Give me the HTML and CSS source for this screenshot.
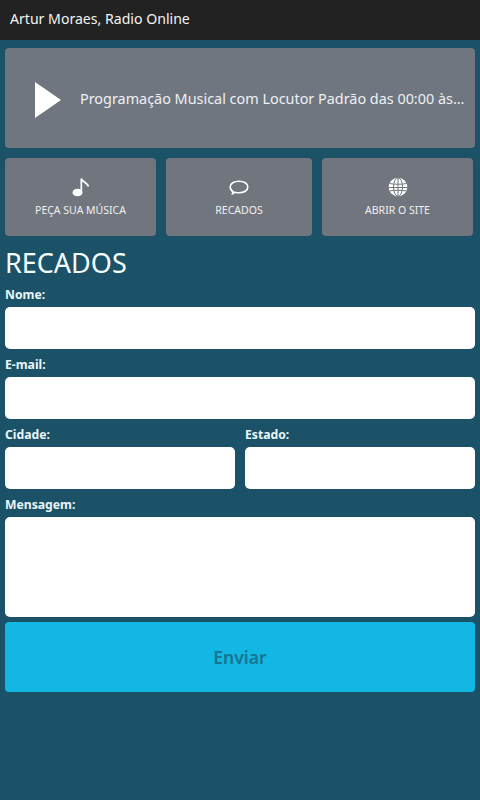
FILE: index.html
```html
<!DOCTYPE html>
<html lang="pt-BR">
<head>
<meta charset="utf-8">
<title>Artur Moraes, Radio Online</title>
<link rel="stylesheet" href="styles.css">
</head>
<body>
<header class="topbar">Artur Moraes, Radio Online</header>
<main class="page">
  <section class="player">
    <svg class="play" width="28" height="36" viewBox="0 0 28 36" aria-hidden="true"><path d="M1 0 L27 18 L1 36 Z" fill="#fff"/></svg>
    <p class="now">Programação Musical com Locutor Padrão das 00:00 às…</p>
  </section>
  <nav class="actions">
    <a class="action">
      <svg width="20" height="20" viewBox="0 0 20 20" aria-hidden="true"><ellipse cx="6.5" cy="15.5" rx="5" ry="3.8" fill="#fff"/><path d="M10.3 15V1.5 C11 5 16.5 5.500 17.500 9.500" fill="none" stroke="#fff" stroke-width="1.700"/></svg>
      <span>PEÇA SUA MÚSICA</span>
    </a>
    <a class="action">
      <svg width="20" height="20" viewBox="0 0 20 20" aria-hidden="true"><path d="M4.200 14.800 C2 13.500 1.200 11.800 1.200 10 C1.200 6.500 5 4.200 10 4.200 C15 4.200 18.800 6.500 18.800 10 C18.800 13.500 15 15.800 10 15.800 C8.500 15.800 7.200 15.600 6 15.200 L3.200 17 Z" fill="none" stroke="#fff" stroke-width="1.600" stroke-linejoin="round"/></svg>
      <span>RECADOS</span>
    </a>
    <a class="action">
      <svg width="20" height="20" viewBox="0 0 20 20" aria-hidden="true"><circle cx="10" cy="10" r="9.300" fill="#fff"/><g fill="none" stroke="#70757e" stroke-width="1"><ellipse cx="10" cy="10" rx="4.500" ry="9.300"/><path d="M10 .7V19.300M1.500 6.500C6 7.500 14 7.500 18.500 6.500M.8 10.500H19.200M1.500 14C6 13 14 13 18.500 14"/></g></svg>
      <span>ABRIR O SITE</span>
    </a>
  </nav>
  <h1 class="title">RECADOS</h1>
  <form class="form">
    <div class="field"><label for="nome">Nome:</label><input id="nome" type="text"></div>
    <div class="field"><label for="email">E-mail:</label><input id="email" type="text"></div>
    <div class="pair">
      <div class="field"><label for="cidade">Cidade:</label><input id="cidade" type="text"></div>
      <div class="field"><label for="estado">Estado:</label><input id="estado" type="text"></div>
    </div>
    <div class="field"><label for="msg">Mensagem:</label><textarea id="msg"></textarea></div>
    <button class="send" type="button">Enviar</button>
  </form>
</main>
</body>
</html>
```

FILE: styles.css
```css
* { box-sizing: border-box; }
html, body { margin: 0; height: 100%; }
body {
  background: #1c5268;
  color: #fff;
  font-family: "Noto Sans", "Open Sans", sans-serif;
  overflow: hidden;
}
.topbar {
  height: 40px;
  padding-left: 10px;
  background: #222222;
  font-size: 14.100px;
  line-height: 37px;
  color: #f4f4f4;
}
.page { padding: 8px 5px 0; }
.player {
  height: 100px;
  display: flex;
  align-items: center;
  padding: 0 0 0 29px;
  gap: 18px;
  background: #6f7680;
  border-radius: 4px;
}
.play { flex: none; margin-top: 4px; }
.now {
  margin: 0;
  font-size: 14.400px;
  color: #eef0f2;
  white-space: nowrap;
}
.actions {
  display: grid;
  grid-template-columns: 151px 146px 151px;
  gap: 10px;
  margin-top: 10px;
}
.action {
  height: 78px;
  display: flex;
  flex-direction: column;
  align-items: center;
  padding-top: 19px;
  gap: 5px;
  background: #70757e;
  border-radius: 4px;
  font-size: 10.500px;
  line-height: 16px;
  color: #f0f0f0;
}
.title {
  margin: 9px 0 0;
  font-size: 27px;
  line-height: 36px;
  font-weight: 400;
  color: #f4ffff;
}
.form { display: flex; flex-direction: column; }
.field { display: flex; flex-direction: column; min-width: 0; }
.field label {
  height: 26px;
  padding-top: 6px;
  font-size: 12.200px;
  line-height: 16px;
  font-weight: 700;
  color: #eaf6f8;
}
.form > .field + .field, .pair, .form > .pair + .field { margin-top: 2px; }
input, textarea {
  display: block;
  width: 100%;
  border: 0;
  background: #fff;
  border-radius: 5px;
  padding: 0;
  resize: none;
}
input { height: 42px; }
textarea { height: 100px; }
.pair {
  display: grid;
  grid-template-columns: 230px 230px;
  gap: 10px;
}
.send {
  height: 70px;
  margin-top: 5px;
  padding-bottom: 2px;
  border: 0;
  border-radius: 4px;
  background: #12b7e4;
  color: #187490;
  font-family: inherit;
  font-size: 17.500px;
  font-weight: 600;
}
```
